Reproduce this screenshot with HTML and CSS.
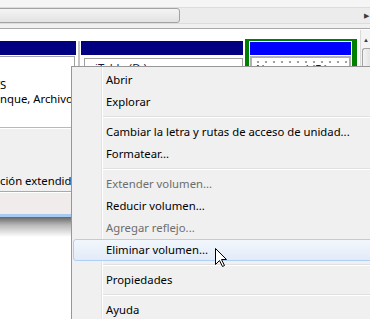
FILE: index.html
```html
<!DOCTYPE html>
<html>
<head>
<meta charset="utf-8">
<link rel="stylesheet" href="styles.css">
</head>
<body>
<div class="screen">
  <div class="topstrip"></div>
  <div class="hscroll">
    <div class="thumb"></div>
    <div class="track"><span class="arrow">&#9654;</span></div>
  </div>
  <div class="band"></div>

  <div class="diskarea">
    <div class="disks">
      <div class="part p1">
        <div class="bar"></div>
        <div class="body">
          <div class="inner">
            <div class="line"><span class="pre"><span>(C:)</span></span></div>
            <div class="line"><span class="pre"><span>97,66 GB NTF</span></span>S</div>
            <div class="line"><span class="pre"><span>Correcto (Sistema, Arra</span></span>nque, Archivo de paginación, Activo)</div>
          </div>
        </div>
      </div>
      <div class="part p2">
        <div class="bar"></div>
        <div class="body">
          <div class="inner"><div class="line label">iTabla (D:)</div></div>
        </div>
      </div>
      <div class="part p3">
        <div class="bar"></div>
        <div class="body">
          <div class="hatch"><div class="line label">Nuevo vol (F:)</div></div>
        </div>
      </div>
    </div>
    <div class="vscroll">
      <span class="uparrow">&#9650;</span>
      <div class="vthumb"></div>
    </div>
  </div>

  <div class="legend"><span class="pre"><span>Parti</span></span>ción extendida</div>
  <div class="status"></div>
  <div class="frame"></div>
  <div class="shadow"></div>
</div>

<div class="menu">
  <div class="item">Abrir</div>
  <div class="item">Explorar</div>
  <div class="sep"></div>
  <div class="item">Cambiar la letra y rutas de acceso de unidad...</div>
  <div class="item">Formatear...</div>
  <div class="sep"></div>
  <div class="item disabled">Extender volumen...</div>
  <div class="item">Reducir volumen...</div>
  <div class="item disabled">Agregar reflejo...</div>
  <div class="item hover">Eliminar volumen...</div>
  <div class="sep"></div>
  <div class="item">Propiedades</div>
  <div class="sep"></div>
  <div class="item">Ayuda</div>
</div>

<svg class="cursor" width="13" height="20" viewBox="0 0 13 20">
  <polygon points="0.5,0.5 0.5,16.5 4.5,12.5 7.5,18.5 9.5,17.5 6.5,11.5 11.5,11.5" fill="#fff" stroke="#000" stroke-width="1"/>
</svg>
</body>
</html>
```

FILE: styles.css
```css
* {
  margin: 0;
  padding: 0;
  box-sizing: border-box;
}
body {
  width: 370px;
  height: 319px;
  overflow: hidden;
  position: relative;
  background: #fff;
  font-family: "Noto Sans", "Open Sans", sans-serif;
  font-size: 11.3px;
  color: #000;
}
.screen {
  width: 370px;
}
.topstrip {
  height: 7px;
  background: #f5f5f5;
}
.hscroll {
  height: 17px;
  display: flex;
  background: #ececec;
  border-top: 1px solid #dcdcdc;
  border-bottom: 1px solid #dcdcdc;
}
.hscroll .thumb {
  width: 184px;
  margin-left: -4px;
  border: 1px solid #a3a3a3;
  border-radius: 3px;
  background: linear-gradient(#f4f4f4, #e2e2e2);
}
.hscroll .track {
  flex: 1;
  display: flex;
  justify-content: flex-end;
  align-items: center;
}
.hscroll .arrow {
  font-size: 7px;
  color: #3c3c3c;
  margin-right: 1px;
}
.band {
  height: 5px;
  background: #f0f0f0;
  border-bottom: 1px solid #a9a9a9;
}

/* text whose start lies left of the visible frame */
.pre {
  display: inline-block;
  width: 0;
  direction: rtl;
  white-space: nowrap;
}
.pre span {
  direction: ltr;
  unicode-bidi: isolate;
}

.diskarea {
  height: 99px;
  display: flex;
  background: #fff;
  border-bottom: 1px solid #b9b9b9;
}
.disks {
  flex: 1;
  display: flex;
  align-items: flex-start;
  padding-top: 10px;
  overflow: hidden;
}
.part {
  display: flex;
  flex-direction: column;
  height: 89px;
}
.part .bar {
  height: 14px;
  background: #000080;
}
.part .body {
  flex: 1;
  padding-top: 1px;
}
.part .inner {
  height: 100%;
  background: #fff;
  border-top: 1px solid #a0a0a0;
  border-right: 1px solid #a0a0a0;
  border-left: 1px solid #a0a0a0;
}
.line {
  white-space: nowrap;
  line-height: 14px;
}
.p1 {
  width: 80px;
  margin-top: 2px;
  padding-right: 2px;
  border-right: 2px solid #c4c4c4;
}
.p1 .inner {
  margin-right: 1px;
  border-left: none;
  padding-top: 7px;
  overflow: hidden;
}
.p2 {
  width: 164px;
  margin-top: 2px;
  padding: 0 1px;
}
.p2 .body {
  padding: 3px 0 0 3px;
}
.p2 .inner {
  padding: 2px 0 0 10px;
  overflow: hidden;
}
.p3 {
  width: 112px;
  margin-left: 1px;
  border-style: solid;
  border-color: #008000;
  border-width: 2px 5px 0 4px;
  padding: 1px 1px 0;
}
.p3 .bar {
  height: 13px;
  background: #0000ff;
}
.p3 .hatch {
  height: 100%;
  border: 2px solid #b0b0b0;
  border-bottom: none;
  background-color: #fff;
  background-image: radial-gradient(circle, #9a9a9a 0.7px, transparent 0.8px);
  background-size: 8px 8px;
  background-position: 2px 0;
  padding: 4px 0 0 4px;
  overflow: hidden;
}
.label {
  color: #1a1a40;
}

.vscroll {
  width: 10px;
  border-left: 1px solid #dadada;
  background: #f4f4f4;
  margin-top: 1px;
}
.vscroll .uparrow {
  display: block;
  font-size: 6px;
  color: #3c3c3c;
  text-align: right;
  padding: 6px 1px 0 0;
}
.vscroll .vthumb {
  margin-top: 4px;
  margin-left: 1px;
  height: 60px;
  border: 1px solid #a3a3a3;
  border-right: none;
  border-radius: 3px 0 0 0;
  background: linear-gradient(90deg, #f4f4f4, #e4e4e4);
}

.legend {
  height: 64px;
  background: #f0f0f0;
  border-top: 1px solid #ffffff;
  border-bottom: 1px solid #a9a9a9;
  padding-top: 44px;
  line-height: 16px;
  white-space: nowrap;
  overflow: hidden;
}
.status {
  height: 22px;
  background: #efeceb;
  border-top: 1px solid #fff;
}
.frame {
  height: 3px;
  background: #a6caf0;
}
.shadow {
  height: 20px;
  background: linear-gradient(#666, #b8b8b8 40%, #fff);
}

.menu {
  position: absolute;
  left: 71px;
  top: 66px;
  width: 320px;
  height: 270px;
  background: #f0f0f0;
  border: 1px solid #979797;
  padding: 2px 1px;
}
.menu::before {
  content: "";
  position: absolute;
  left: 29px;
  top: 0;
  bottom: 0;
  width: 1px;
  background: #e2e3e3;
  border-right: 1px solid #fff;
  box-sizing: content-box;
}
.item {
  position: relative;
  height: 22px;
  line-height: 20px;
  padding-left: 32px;
  white-space: nowrap;
  border: 1px solid transparent;
  border-radius: 3px;
}
.item.disabled {
  color: #6d6d6d;
}
.item.hover {
  border-color: #aecff7;
  background: linear-gradient(#f2f7fd, #e2ebf7);
}
.sep {
  height: 8px;
  margin-left: 30px;
  padding-top: 3px;
}
.sep::after {
  content: "";
  display: block;
  height: 1px;
  background: #e0e0e0;
  border-bottom: 1px solid #fff;
  box-sizing: content-box;
}
.cursor {
  position: absolute;
  left: 215px;
  top: 248px;
}
```
